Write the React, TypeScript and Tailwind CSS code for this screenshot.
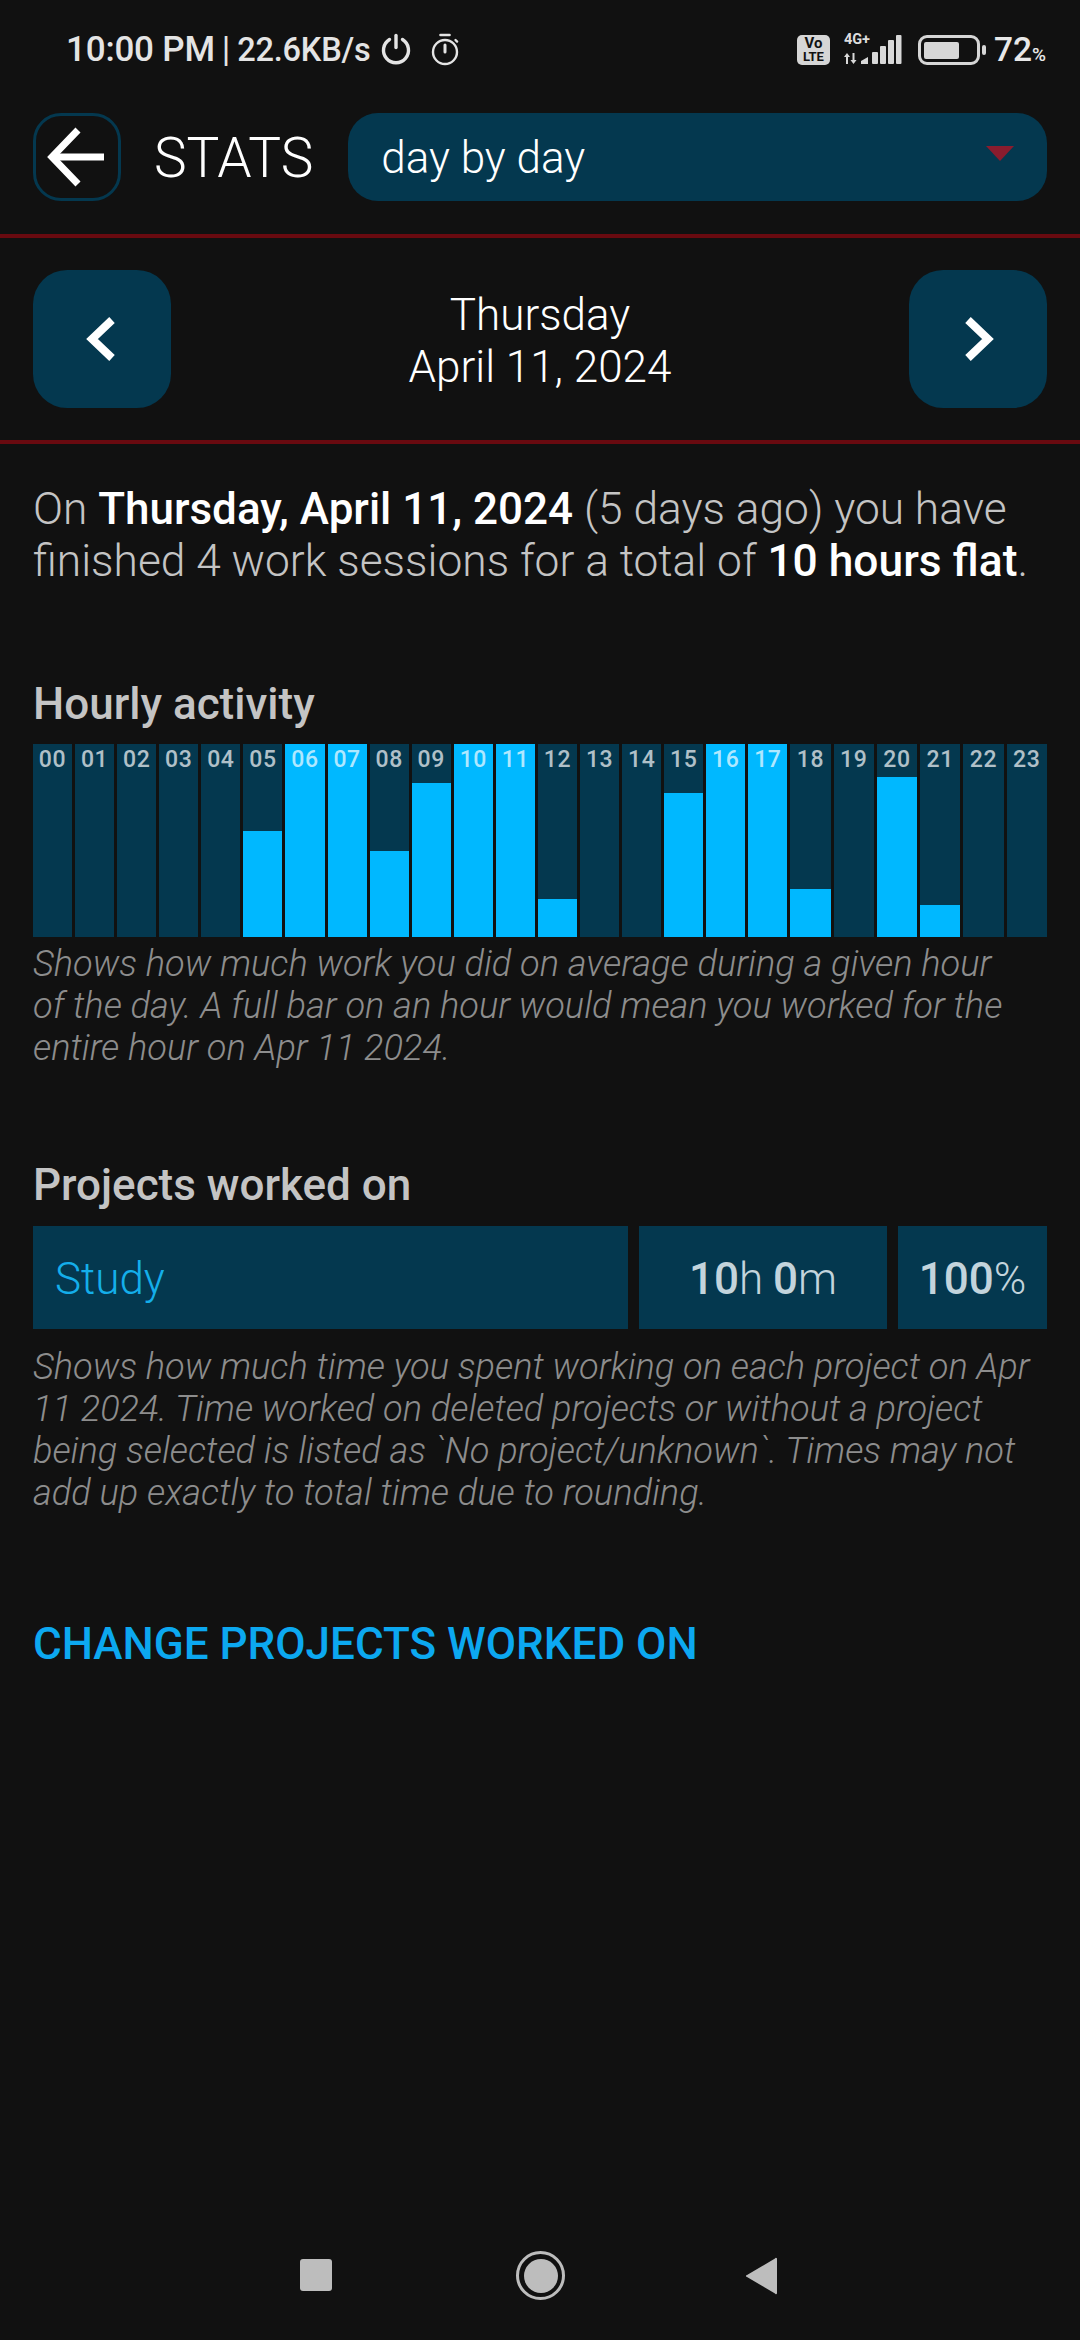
import { useState } from 'react'

const HOURS = [0, 0, 0, 0, 0, 106, 193, 193, 86, 154, 193, 193, 38, 0, 0, 144, 193, 193, 48, 0, 160, 32, 0, 0]

function StatusBar() {
  return (
    <div className="flex h-[98px] items-center justify-between pl-[66px] pr-[34px] pt-[2px] text-[#e4e4e4]">
      <div className="flex items-center text-[35px] font-medium tracking-[-0.2px]">
        <span>10:00 PM</span>
        <span className="mx-[7px] text-[35px] font-normal">|</span>
        <span className="text-[32.500px]">22.6KB/s</span>
        <svg width="32" height="32" viewBox="0 0 32 32" className="ml-[9px] -mt-[3px]" fill="none" stroke="#e4e4e4" strokeWidth="3.4" strokeLinecap="round">
          <path d="M9.500 6.500a12.500 12.500 0 1 0 13 0" />
          <path d="M16 2.500v12" />
        </svg>
        <svg width="30" height="34" viewBox="0 0 30 34" className="ml-[18px] -mt-[1px]" fill="none" stroke="#e4e4e4" strokeWidth="2.400" strokeLinecap="round">
          <path d="M10.500 2h9" strokeWidth="2.600" />
          <circle cx="15" cy="19" r="12" />
          <path d="M15 12v7" strokeWidth="3" />
          <path d="M25.500 7l1.600 1.600" />
        </svg>
      </div>
      <div className="flex items-center">
        <div className="flex h-[30px] w-[33px] flex-col items-center justify-center rounded-[5px] bg-[#d6d6d6] font-bold text-[#111111]">
          <span className="text-[15px] leading-[13px]">Vo</span>
          <span className="text-[13px] leading-[13px]">LTE</span>
        </div>
        <div className="relative ml-[14px] h-[30px] w-[58px]">
          <svg width="58" height="30" viewBox="0 0 58 30" fill="#d8d8d8">
            <path d="M0 22l3-4 3 4H4v7H2v-7zM6.500 25l3 4 3-4h-2v-7h-2v7z" />
            <path d="M17 29v-3l7-4v7z" />
            <rect x="28" y="17" width="6" height="12" rx="1" />
            <rect x="36" y="11" width="6" height="18" rx="1" />
            <rect x="44" y="5" width="6" height="24" rx="1" />
            <rect x="52" y="0" width="5.500" height="29" rx="1" />
          </svg>
          <span className="absolute left-0 -top-[1px] text-[14.500px] font-bold leading-[12px] text-[#dddddd]">4G+</span>
        </div>
        <div className="ml-[16px] flex h-[30px] w-[62px] items-center rounded-[9px] border-[3px] border-[#d6d6d6] pl-[3px]">
          <div className="h-[17px] w-[35px] rounded-[2px] bg-[#d6d6d6]" />
        </div>
        <div className="ml-[2px] h-[10px] w-[4px] rounded-[2px] bg-[#d6d6d6]" />
        <span className="ml-[8px] text-[33.500px] font-medium leading-none text-[#e8e8e8]">72</span>
        <span className="mt-[8px] text-[19px] font-medium leading-none text-[#e8e8e8]">%</span>
      </div>
    </div>
  )
}

function Header({ mode }: { mode: string }) {
  return (
    <div className="flex h-[140px] items-start border-b-[4px] border-[#690a10] pl-[33px] pr-[33px] pt-[15px]">
      <button className="flex h-[88px] w-[88px] items-center justify-center rounded-[28px] border-[3px] border-[#04384f]">
        <svg width="62" height="62" viewBox="0 0 62 62" fill="none" stroke="#ffffff" strokeWidth="7">
          <path d="M58 31H9" />
          <path d="M32 4L6 31l26 27" />
        </svg>
      </button>
      <span className="ml-[33px] mt-[14px] text-[55px] font-light leading-[62px] text-white">STATS</span>
      <div className="ml-[35px] flex h-[88px] flex-1 items-center justify-between rounded-[30px] bg-[#04384f] pl-[33px] pr-[33px]">
        <span className="mt-[2px] text-[44px] font-light leading-none text-white">{mode}</span>
        <svg width="28" height="16" viewBox="0 0 28 16" className="-mt-[6px]">
          <path d="M0 0h28L14 15z" fill="#8a1c2e" />
        </svg>
      </div>
    </div>
  )
}

function NavButton({ dir }: { dir: 'left' | 'right' }) {
  return (
    <button className="flex h-[138px] w-[138px] items-center justify-center rounded-[34px] bg-[#04384f]">
      <svg width="36" height="48" viewBox="0 0 36 48" fill="none" stroke="#ffffff" strokeWidth="8">
        <path d={dir === 'left' ? 'M28 5L8 24l20 19' : 'M8 5l20 19L8 43'} />
      </svg>
    </button>
  )
}

function DateRow() {
  return (
    <div className="flex h-[206px] items-center justify-between border-b-[4px] border-[#690a10] pl-[33px] pr-[33px]">
      <NavButton dir="left" />
      <div className="mt-[4px] text-center text-[44px] font-light leading-[52px] text-white">
        <div>Thursday</div>
        <div>April 11, 2024</div>
      </div>
      <NavButton dir="right" />
    </div>
  )
}

function HourBar({ hour, fill }: { hour: number; fill: number }) {
  const label = String(hour).padStart(2, '0')
  return (
    <div className={`relative flex h-[193px] flex-col justify-end bg-[#04384f] ${hour >= 18 ? 'flex-[1.03]' : 'flex-1'}`}>
      <div className="bg-[#00b8ff]" style={{ height: fill }} />
      <span className="absolute inset-x-0 top-[3px] text-center text-[23px] font-medium leading-[26px] tracking-[0.6px] text-white/70">
        {label}
      </span>
    </div>
  )
}

function Caption({ children }: { children: React.ReactNode }) {
  return <p className="text-[36.200px] font-light italic leading-[42px] text-[#8d8d8d]">{children}</p>
}

function ProjectRow() {
  return (
    <div className="mt-[17px] flex h-[103px] gap-[11px] text-[44px] font-light">
      <div className="flex flex-1 items-center bg-[#04384f] pl-[22px] pt-[3px] text-[#14aeea]">Study</div>
      <div className="flex w-[248px] items-center justify-center bg-[#04384f] pt-[3px] text-[#c3d4dc]">
        <span className="font-medium">10</span>h<span className="ml-[10px] font-medium">0</span>m
      </div>
      <div className="flex w-[149px] items-center justify-center bg-[#04384f] pt-[3px] text-[#c3d4dc]">
        <span className="font-medium">100</span>%
      </div>
    </div>
  )
}

export default function App() {
  const [mode] = useState('day by day')

  return (
    <div className="flex h-[2340px] w-[1080px] flex-col overflow-hidden bg-[#111111] font-['Roboto',sans-serif]">
      <StatusBar />
      <Header mode={mode} />
      <DateRow />

      <div className="flex-1 pl-[33px] pr-[33px]">
        <p className="mt-[39px] text-[44.300px] font-light leading-[52px] text-[#c4c4c4]">
          On <b className="text-[44px] font-medium text-white">Thursday, April 11, 2024</b> (5 days ago) you have finished 4 work sessions for a total of{' '}
          <b className="font-medium text-white">10 hours flat</b>.
        </p>

        <h2 className="mt-[93px] text-[44px] font-medium leading-[48px] text-[#c4c4c4]">Hourly activity</h2>
        <div className="mt-[16px] flex gap-[3px]">
          {HOURS.map((fill, hour) => (
            <HourBar key={hour} hour={hour} fill={fill} />
          ))}
        </div>
        <div className="mt-[6px]">
          <Caption>
            Shows how much work you did on average during a given hour
            <br />
            of the day. A full bar on an hour would mean you worked for the entire hour on Apr 11 2024.
          </Caption>
        </div>

        <h2 className="mt-[92px] text-[44px] font-medium leading-[48px] text-[#c4c4c4]">Projects worked on</h2>
        <ProjectRow />
        <div className="mt-[17px]">
          <Caption>
            Shows how much time you spent working on each project on Apr 11 2024. Time worked on deleted projects or without a project being selected is listed as `No project/unknown`. Times may not add up exactly to total time due to rounding.
          </Caption>
        </div>

        <div className="mt-[106px] text-[44px] font-medium leading-[48px] text-[#0ca8f0]">CHANGE PROJECTS WORKED ON</div>
      </div>

      <div className="flex h-[110px] items-start pl-[300px] pt-[21px]">
        <div className="mt-[8px] h-[32px] w-[32px] rounded-[3px] bg-[#bdbdbd]" />
        <div className="ml-[184px] flex h-[49px] w-[49px] items-center justify-center rounded-full border-[3px] border-[#bdbdbd]">
          <div className="h-[34px] w-[34px] rounded-full bg-[#bdbdbd]" />
        </div>
        <svg width="32" height="38" viewBox="0 0 32 38" className="ml-[180px] mt-[6px]">
          <path d="M30 1.500L2 18a1 1 0 0 0 0 2l28 16.500a1 1 0 0 0 2-1V2.500a1 1 0 0 0-2-1z" fill="#bdbdbd" />
        </svg>
      </div>
    </div>
  )
}
